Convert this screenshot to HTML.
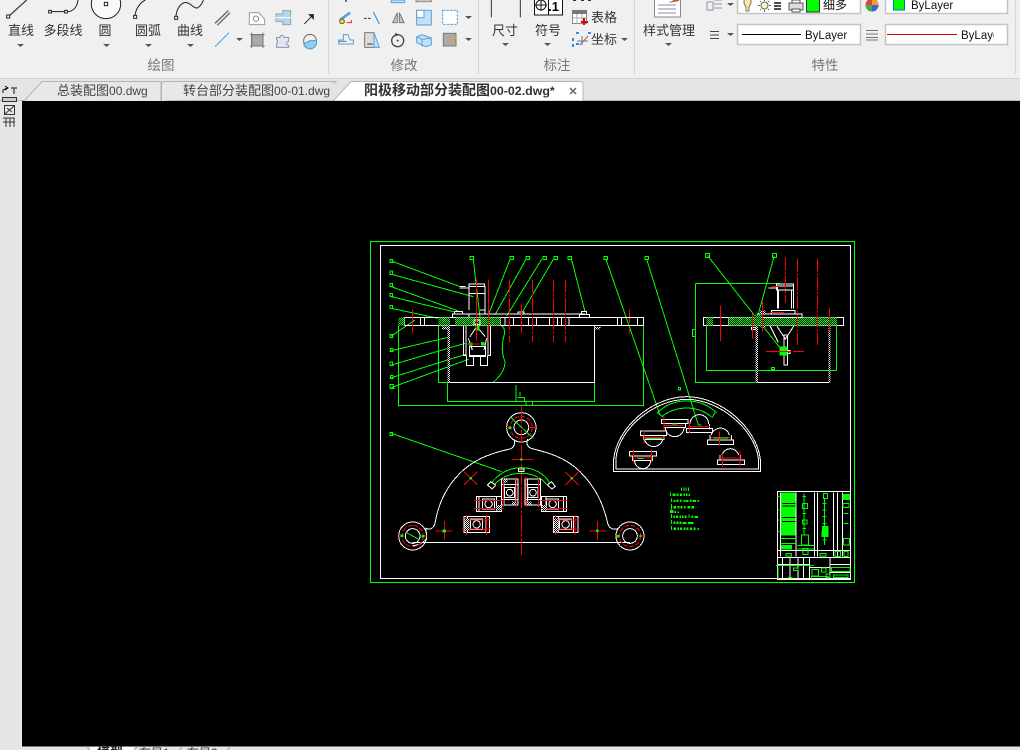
<!DOCTYPE html>
<html lang="zh"><head><meta charset="utf-8"><title>CAD</title>
<style>
html,body{margin:0;padding:0;background:#e6e6e6}
body{width:1020px;height:750px;overflow:hidden;position:relative}
svg{position:absolute;left:0;top:0;display:block}
text{font-family:"Liberation Sans","Noto Sans CJK SC",sans-serif}
.l{font-size:13px;fill:#333;text-anchor:middle}
.g{font-size:13.500px;fill:#777;text-anchor:middle}
.t{font-size:12px;fill:#444}
.c{font-size:13px}
.b{font-size:11.500px;fill:#111}
.gn{fill:none;stroke:#0f0;stroke-width:3}
.wh{fill:none;stroke:#fff;stroke-width:3}
.rd{fill:none;stroke:#f00;stroke-width:3}
</style></head><body>
<svg width="1020" height="750" viewBox="0 0 1020 750" xmlns="http://www.w3.org/2000/svg">
<defs>
<pattern id="h" width="6" height="6" patternUnits="userSpaceOnUse"><rect width="6" height="6" fill="#000"/><rect width="3" height="3" fill="#0f0"/><rect x="3" y="3" width="3" height="3" fill="#0f0"/></pattern>
<pattern id="w" width="6" height="6" patternUnits="userSpaceOnUse"><rect width="6" height="6" fill="#000"/><rect width="3" height="3" fill="#fff"/><rect x="3" y="3" width="3" height="3" fill="#fff"/></pattern>
<path id="bal" d="M-6 0h12M-4 0v-10h8v10" fill="none" stroke="#0f0" stroke-width="3"/>
<clipPath id="c1"><rect x="961" y="25" width="33" height="19"/></clipPath>
</defs>

<!-- ribbon -->
<rect width="1020" height="78" fill="#f0f0f0"/>
<rect y="78" width="1020" height="1" fill="#d4d4d4"/>
<rect y="79" width="1020" height="22" fill="#e4e4e4"/>
<rect y="100" width="1020" height="1" fill="#bbb"/>
<rect x="0" y="101" width="22" height="649" fill="#e6e6e6"/>
<rect x="328" y="0" width="1" height="74" fill="#d5d5d5"/>
<rect x="478" y="0" width="1" height="74" fill="#d5d5d5"/>
<rect x="634" y="0" width="1" height="74" fill="#d5d5d5"/>
<rect x="1015" y="0" width="1" height="74" fill="#d5d5d5"/>

<text class="l" x="21" y="35">直线</text>
<text class="l" x="63" y="35">多段线</text>
<text class="l" x="105" y="35">圆</text>
<text class="l" x="148" y="35">圆弧</text>
<text class="l" x="190" y="35">曲线</text>
<text class="l" x="505" y="35">尺寸</text>
<text class="l" x="548" y="35">符号</text>
<text class="l" x="604" y="22">表格</text>
<text class="l" x="604" y="44">坐标</text>
<text class="l" x="669" y="35">样式管理</text>
<text class="g" x="161" y="70">绘图</text>
<text class="g" x="404" y="70">修改</text>
<text class="g" x="557" y="70">标注</text>
<text class="g" x="825" y="70">特性</text>

<!-- draw icons (zoom coordinates) -->
<g transform="scale(.33333)" fill="none" stroke="#222" stroke-width="3">
<path d="M25 50L80 0" stroke-width="4" stroke="#444"/><rect x="20" y="45" width="9" height="9" fill="#fff"/>
<path d="M154 35h40M202 35C220 35 232 20 234 0"/><rect x="146" y="31" width="8" height="8" fill="#fff"/><rect x="194" y="31" width="8" height="8" fill="#fff"/>
<circle cx="318" cy="12" r="44" fill="#fafafa"/><rect x="313" y="7" width="10" height="10"/>
<path d="M405 46C408 25 420 8 436 0"/><rect x="401" y="46" width="9" height="9" fill="#fff"/>
<path d="M528 48C530 25 545 5 560 8S585 30 595 22S608 8 610 0"/><rect x="524" y="49" width="9" height="9" fill="#fff"/>
<path d="M645 70L685 32M652 76L690 38" stroke="#666" stroke-width="4"/>
<path d="M645 140L687 98" stroke="#3a9ae0" stroke-width="3"/>
<path d="M748 38h28l18 20v16h-46z" stroke="#999" fill="#fff"/><circle cx="768" cy="56" r="8" stroke="#888"/>
<path d="M828 42h20v-10h24v42h-24v-10h-20z" stroke="#8aa" fill="#b8d4ea"/><path d="M826 53h48" stroke="#fff"/>
<path d="M913 72L938 46" stroke="#333"/><path d="M928 44h12v12z" fill="#222" stroke="#222"/>
<rect x="755" y="104" width="34" height="34" fill="#aaa" stroke="#666"/><path d="M750 104h44M750 138h44M755 98v46M789 98v46" stroke="#777"/>
<path d="M830 112h10a6 6 0 0 1 12 0h14v12a6 6 0 0 0 0 12v6h-36v-12a6 6 0 0 0 0-10z" stroke="#8a94a8" fill="#e2e6ee"/>
<circle cx="930" cy="122" r="19" stroke="#666"/><path d="M930 122h19a19 19 0 0 1-38 10z" fill="#8fd0f0" stroke="#4a9ac8"/>
</g>
<g fill="#555">
<path d="M17 44h7l-3.500 3zM103 44h7l-3.500 3zM145 44h7l-3.500 3zM187 44h7l-3.500 3zM236 38h7l-3.500 3zM502 43h7l-3.500 3zM544 43h7l-3.500 3zM465 16h7l-3.500 3zM465 38h7l-3.500 3zM621 38h7l-3.500 3zM665 43h7l-3.500 3zM727 3h7l-3.500 3zM727 33h7l-3.500 3zM850 3h7l-3.500 3zM850 33h7l-3.500 3zM998 3h7l-3.500 3zM998 33h7l-3.500 3z"/>
</g>

<!-- modify icons -->
<g transform="translate(330,0) scale(.33333)" fill="none" stroke-width="3">
<rect x="184" y="0" width="40" height="8" fill="#c4e0f6" stroke="#5aa0d8"/><rect x="258" y="0" width="46" height="5" fill="#fff" stroke="#888"/>
<circle cx="48" cy="3" r="3" fill="#444"/>
<path d="M30 60l30-22" stroke="#5aa0d8" stroke-width="8"/><circle cx="36" cy="64" r="7" fill="#f5e000" stroke="#555"/><path d="M50 68h14v-8" stroke="#c33"/>
<path d="M102 55h22" stroke="#333" stroke-dasharray="8 4"/><path d="M130 36l18 36" stroke="#2a8ae0"/>
<path d="M188 68l14-30v30zM208 38l14 30h-14z" stroke="#777" fill="#bcd"/>
<rect x="260" y="31" width="44" height="44" fill="#c4e0f6" stroke="#5aa0d8"/><rect x="260" y="31" width="22" height="22" fill="#fff" stroke="#5aa0d8"/>
<rect x="338" y="31" width="44" height="42" fill="#fff" stroke="#5aa0d8" stroke-dasharray="8 3"/>
<path d="M26 132h44v-12h-10l-6-16h-14v16h-14z" stroke="#5aa0d8"/><path d="M26 124h24" stroke="#777"/>
<path d="M104 98h28v44h-28z" fill="#ddd" stroke="#777"/><path d="M132 98l16 44h-16z" fill="#c4e0f6" stroke="#5aa0d8"/><path d="M112 132h16" stroke="#333"/>
<circle cx="203" cy="122" r="18" stroke="#444" stroke-width="4"/><circle cx="203" cy="122" r="3" fill="#444"/><path d="M196 98l10 6-10 6" fill="#444"/>
<path d="M260 110l16-6 28 10v20l-16 6-28-12z" fill="#c4e0f6" stroke="#5aa0d8"/><path d="M276 118l28-4M276 118v22M260 110l16 8" stroke="#5aa0d8"/>
<rect x="340" y="100" width="38" height="38" fill="#aaa" stroke="#777"/><path d="M360 130l20-20" stroke="#e8a020" stroke-width="5"/>
<path d="M484 0v52M571 0v52" stroke="#333"/>
</g>

<!-- dimension -->
<g fill="none">
<rect x="534.500" y="-2" width="28" height="17" fill="#fff" stroke="#111"/>
<path d="M548.500 0v15" stroke="#111"/>
<circle cx="541" cy="5" r="5" stroke="#111"/>
<path d="M535 5h12M541 -1v12" stroke="#111"/>
<path d="M573 0h3M581 0h3M588 0h3" stroke="#333" stroke-width="2"/>
<rect x="572.500" y="10.500" width="14" height="13" fill="#fff" stroke="#888"/>
<rect x="572" y="10" width="15" height="4" fill="#777"/>
<path d="M573 18h13M577 14v10M582 14v10" stroke="#aaa"/>
<path d="M584 18v7M581 22h7" stroke="#d00" stroke-width="2"/>
<path d="M576 33h3M576 44h3M588 33h3M573 38v3M573 44v3" stroke="#3a8ad8" stroke-width="2"/>
<path d="M580 45l8-9M582 36v9M577 41h11" stroke="#777"/>
<rect x="654.500" y="-4" width="26" height="21" fill="#fff" stroke="#888"/>
<path d="M658 5h18M658 9h18M658 13h18" stroke="#88a" stroke-width="1"/>
<path d="M668 3l10-5 1 3z" fill="#b06020"/>
</g>
<text x="553.500" y="11" font-size="13" font-weight="bold" fill="#000" text-anchor="middle">.1</text>

<!-- layers and props -->
<rect x="737.500" y="-3.500" width="123" height="17" fill="#fff" stroke="#c4c4c4" stroke-width="1.500"/>
<rect x="885.500" y="-3.500" width="122" height="17" fill="#fff" stroke="#c4c4c4" stroke-width="1.500"/>
<rect x="737.500" y="24.500" width="123" height="20" fill="#fff" stroke="#c4c4c4" stroke-width="1.500"/>
<rect x="885.500" y="24.500" width="122" height="20" fill="#fff" stroke="#c4c4c4" stroke-width="1.500"/>
<g fill="none" stroke="#555">
<path d="M707 2h6v8h-6zM714 0h8M714 4h8M714 8h8" stroke="#8a94a8"/>
<path d="M710 31.500h9M710 35h9M710 38.500h9" stroke="#444"/>
<path d="M866 30.500h12M866 34h12M866 37.500h12M866 40h12" stroke="#777"/>
<path d="M745 -1a4.500 4.500 0 0 1 5 0c2 2 1 5-1 8v4h-3v-4c-2-3-3-6-1-8z" fill="#fce59c" stroke="#777"/>
<circle cx="764.500" cy="5.500" r="3.500" fill="#fff6c8" stroke="#666"/>
<path d="M758 5.500h2M769 5.500h2M764.500 -1v2M764.500 10v2M760 1l1 1M769 1l-1 1M760 10l1-1M769 10l-1-1" stroke="#666"/>
<path d="M774 3h7M774 6h7M774 9h7" stroke="#111" stroke-width="1.500"/><path d="M781 -1h6" stroke="#aa0" stroke-width="2"/>
<rect x="789" y="3" width="14" height="7" fill="#ddd" stroke="#555"/><rect x="792" y="0" width="8" height="3" fill="#fff" stroke="#555"/><rect x="792" y="9" width="8" height="3" fill="#fff" stroke="#555"/>
</g>
<rect x="806.500" y="-3" width="13" height="15" fill="#0f0" stroke="#333"/>
<text x="823" y="9" font-size="12" fill="#111">细多</text>
<circle cx="872" cy="5" r="6.500" fill="#e04040"/><path d="M872 5V-1.500A6.500 6.500 0 0 1 878.500 5z" fill="#f0a020"/><path d="M872 5h6.500A6.500 6.500 0 0 1 872 11.500z" fill="#4060e0"/><path d="M872 5v6.500A6.500 6.500 0 0 1 865.500 5z" fill="#40b040"/>
<rect x="893.500" y="-2" width="11" height="12" fill="#0f0" stroke="#0a70c0"/>
<text class="b" x="911" y="9">ByLayer</text>
<path d="M742 34.500h59" stroke="#000"/>
<text class="b" x="805" y="39">ByLayer</text>
<path d="M887 34.500h70" stroke="#d00"/>
<text class="b" x="961" y="39" clip-path="url(#c1)">ByLayer</text>

<!-- tabs -->
<path d="M24 101L42 81.500H161V101" fill="#e8e8e8" stroke="#b4b4b4"/>
<path d="M161.500 101V84l2-2.500H336L333 84" fill="#e8e8e8" stroke="#b4b4b4"/>
<path d="M333 101L351 81.500H581Q583 81.500 583 84V101Z" fill="#fff" stroke="#b4b4b4"/>
<text class="t" x="57" y="95"><tspan class="c">总装配图</tspan>00.dwg</text>
<text class="t" x="183" y="95"><tspan class="c">转台部分装配图</tspan>00-01.dwg</text>
<text x="364" y="95" font-size="12.400" font-weight="bold" fill="#333"><tspan font-size="14">阳极移动部分装配图</tspan>00-02.dwg*</text>
<path d="M570 88l6 6M576 88l-6 6" stroke="#666" stroke-width="1.500"/>

<!-- left strip -->
<g fill="none" stroke="#333">
<path d="M3 93v-3l4-2M5 86l3 2-3 2" stroke="#111"/>
<path d="M11 88h6M14 88v6" stroke="#555" stroke-width="1.500"/>
<rect x="2.500" y="97.500" width="14" height="4" fill="#ccc"/>
<rect x="4.500" y="105.500" width="10" height="9"/><path d="M5 114l9-8M7 108l5 4"/>
<path d="M3 118h12M6 118v9M10 118v9M14 118v9M3 122h12"/>
</g>

<!-- bottom tabs -->
<rect x="22" y="101" width="998" height="645.500" fill="#000"/>
<rect x="22" y="746" width="998" height="1" fill="#777"/>
<path d="M87 747l3 3M134 750l3-3" stroke="#aaa"/>
<rect x="90" y="747" width="44" height="3" fill="#fff"/>
<path d="M182 747l-3 3M230 747l-3 3" stroke="#aaa"/>
<text x="97" y="757" font-size="13" font-weight="bold" fill="#222">模型</text>
<text x="139" y="757" font-size="12" fill="#333">布局1</text>
<text x="187" y="757" font-size="12" fill="#333">布局2</text>

<!-- CAD frames -->
<g shape-rendering="crispEdges">
<rect x="370.500" y="241.500" width="484" height="341" fill="none" stroke="#0f0"/>
<rect x="380.500" y="245.500" width="470" height="333" fill="none" stroke="#fff"/>

<!-- front view -->
<g transform="translate(370,240) scale(.33333)">
<g class="gn">
<path d="M64 63L270 140M64 103L310 170M64 140L265 213M64 170L250 215M64 205L205 235M64 288L135 240M64 332L235 292M64 375L285 310M64 413L290 342M66 442L295 358"/>
<path d="M300 49h11v10h-11zM420 49h10v10h-10zM468 49h10v10h-10zM519 49h10v10h-10zM552 49h10v10h-10zM594 49h10v10h-10z" />
<path d="M310 60L330 232M420 58L355 225M468 58L375 225M515 58L410 228M550 58L458 215M605 60L645 215"/>
<path d="M85 257V497H820V257M205 257V427H232M232 427V485H673V427M85 497v3M820 497v3M438 435V485M442 472h22v13M468 485h20v11h-20zM450 456v12" />
<path d="M370 427C395 405 405 385 405 365C395 340 395 320 400 295C405 280 405 265 395 257"/>
</g>
<use href="#bal" x="64" y="68"/><use href="#bal" x="64" y="103"/><use href="#bal" x="64" y="140"/><use href="#bal" x="64" y="170"/><use href="#bal" x="64" y="206"/><use href="#bal" x="64" y="293"/><use href="#bal" x="65" y="335"/><use href="#bal" x="64" y="376"/><use href="#bal" x="65" y="416"/><rect x="60" y="433" width="11" height="11" fill="none" stroke="#0f0" stroke-width="3"/><path d="M58 445h16" stroke="#0f0" stroke-width="3"/>
<rect x="103" y="232" width="717" height="25" class="wh"/>
<path class="wh" d="M151 232v25M163 232v25M392 232v25M405 232v25M430 232v25M476 232v25M499 232v25M538 232v25M551 232v25M562 232v25M575 232v25M597 232v25M742 232v25M755 232v25M802 232v25"/>
<rect x="85" y="232" width="18" height="25" fill="url(#h)"/>
<rect x="205" y="232" width="35" height="25" fill="url(#h)"/>
<rect x="255" y="232" width="137" height="25" fill="url(#h)"/>
<path class="wh" d="M247 232v-10h50v10M297 210v-70h48v70M297 132h47v8h-47zM297 160h48M330 210h15v12h-48M300 222h345M628 232v-9h30v9M634 222v-8h16v8M268 144h28M270 140h16M253 220v-6h24v6M444 222v-6h18v6" />
<path class="wh" d="M280 257v90h8V257M354 257v90h8V257M298 347h50M289 347v30h21v-30M331 347v30h21v-30M298 320h48v30h-48zM300 290l20-30 26 30M295 295l12 35M350 295l-8 35M312 240h18v14h-18z"/>
<path class="wh" d="M673 257V427H232M673 263h18"/>
<rect x="232" y="257" width="8" height="170" fill="url(#w)"/>
<rect x="216" y="259" width="16" height="9" fill="url(#w)"/>
<rect x="674" y="261" width="16" height="8" fill="url(#w)"/>
<rect x="317" y="258" width="12" height="14" fill="#0f0"/><rect x="295" y="308" width="12" height="8" fill="#0f0"/><rect x="333" y="306" width="10" height="10" fill="#0f0"/>
<path class="rd" d="M127 208v72M355 118v188M454 194v85M319 118v185"/>
<path class="rd" d="M292 312h36" />
<path class="rd" stroke-dasharray="40 5 6 5" d="M418 118v188M487 118v188M550 118v188M586 118v188M778 208v72"/>
</g>

<!-- plan view -->
<g transform="translate(370,405) scale(.33333)">
<path class="gn" d="M64 85L395 200"/>
<use href="#bal" x="64" y="92"/>
<path class="wh" d="M128 422C150 420 165 410 170 398L168 370C180 375 190 372 195 355C205 295 230 240 280 195C310 170 345 148 420 132C432 128 436 118 432 102M473 102C468 118 473 128 490 132C560 148 600 170 630 200C680 250 700 300 712 350C716 372 730 376 745 370"/>
<path class="wh" d="M128 412H780"/>
<circle class="wh" cx="454" cy="67" r="44"/>
<circle class="wh" cx="454" cy="67" r="22"/>
<circle class="wh" cx="128" cy="393" r="42"/><circle class="wh" cx="128" cy="393" r="22"/>
<circle class="wh" cx="780" cy="393" r="42"/><circle class="wh" cx="780" cy="393" r="22"/>
<circle class="rd" cx="454" cy="67" r="33" stroke-dasharray="14 5"/><circle class="rd" cx="128" cy="393" r="32" stroke-dasharray="14 5"/><circle class="rd" cx="780" cy="393" r="32" stroke-dasharray="14 5"/>
<path class="rd" d="M454 5V115M454 120v330" stroke-dasharray="50 6 8 6"/>
<path class="rd" d="M408 67h10M476 67h22M82 393h18M160 393h14M735 393h14M808 393h14M424 163h65M196 378h52M223 348v56M658 378h52M682 348v56M282 200l40 40M322 200l-40 40M586 200l40 40M626 200l-40 40"/>
<path class="gn" d="M420 35L490 100M108 382l40 22"/>
<path class="gn" d="M362 236C385 205 420 188 454 188C490 188 525 205 540 236" stroke-width="7"/>
<path class="gn" d="M372 240C395 215 425 205 454 205C482 205 515 215 530 240" stroke-width="6"/>
<path class="wh" d="M352 240l10-10 15 10-10 12zM532 240l12-10 12 14-10 8zM446 192h16v8h-16z"/>
<g>
<path class="wh" d="M394 222h50v78h-50zM402 222v78M436 222v78M394 238h50M394 284h50M404 248h30v30h-30z"/><circle class="wh" cx="419" cy="263" r="10"/>
<path class="wh" d="M465 222h47v78h-47zM473 222v78M505 222v78M465 238h47M465 284h47M474 248h30v30h-30z"/><circle class="wh" cx="489" cy="263" r="10"/>
<path class="wh" d="M319 274h76v46h-76zM327 274v46M379 274v46M338 282h36v30h-36z"/><circle class="wh" cx="356" cy="297" r="11"/>
<path class="wh" d="M514 274h76v46h-76zM528 274v46M580 274v46M530 282h36v30h-36z"/><circle class="wh" cx="548" cy="297" r="11"/>
<path class="wh" d="M282 335h76v48h-76zM292 335v48M348 335v48M302 342h36v32h-36z"/><circle class="wh" cx="320" cy="358" r="11"/>
<path class="wh" d="M550 335h74v48h-74zM566 335v48M610 335v48M568 342h36v32h-36z"/><circle class="wh" cx="587" cy="358" r="11"/>
<path class="rd" d="M400 216v90M438 216v90M468 216v90M506 216v90M312 286h88M312 310h88M512 286h80M512 310h80M290 330v60M350 330v60M276 345h84M276 372h84M556 330v60M615 330v60M545 345h84M545 372h84"/>
</g>
<rect x="400" y="224" width="12" height="8" fill="url(#w)"/><rect x="426" y="290" width="14" height="8" fill="url(#w)"/><rect x="470" y="290" width="14" height="8" fill="url(#w)"/><rect x="380" y="300" width="14" height="16" fill="url(#w)"/><rect x="516" y="300" width="14" height="16" fill="url(#w)"/><rect x="284" y="340" width="14" height="38" fill="url(#w)"/><rect x="552" y="340" width="14" height="42" fill="url(#w)"/>
<g fill="#0f0"><rect x="218" y="373" width="10" height="10"/><rect x="678" y="373" width="8" height="8"/><rect x="298" y="216" width="8" height="8"/><rect x="601" y="216" width="7" height="7"/><rect x="450" y="160" width="7" height="6"/><rect x="92" y="388" width="8" height="8"/><rect x="155" y="390" width="8" height="8"/><rect x="740" y="390" width="8" height="8"/><rect x="808" y="390" width="6" height="6"/><rect x="416" y="64" width="8" height="8"/></g>
</g>

<!-- side + half-round views -->
<g transform="translate(600,240) scale(.33333)">
<path class="gn" d="M18 58L180 525M140 58L295 555M322 46L545 330M523 46L470 240M286 130H540M286 130V428H468M319 258V391H710V258M277 268h10v22h-10zM514 382h10v7h-10z"/>
<path class="gn" d="M12 49h10v10H12zM135 49h10v10h-10zM316 41h12v11h-12zM517 41h12v11h-12z"/>
<path class="gn" d="M236 442h6v8h-6zM175 520l10 8M345 518l-8 14"/>
<path class="wh" d="M310 232H731V257H310zM362 232v25M385 232v25"/>
<rect x="319" y="232" width="20" height="25" fill="url(#h)"/>
<rect x="385" y="232" width="326" height="25" fill="url(#h)"/>
<path class="wh" d="M532 205v-67h48v67M530 132h50v18h-50zM505 144h28M536 150v55M575 150v55M515 212h70v10h-70zM470 222h136v10H470M530 257l26 40 26-40M510 257l25 50M552 285h10v90h-10zM470 257v170M688 257v170M470 427H688M455 262h12v6h-12zM540 332h30v8h-30z"/>
<rect x="466" y="257" width="8" height="170" fill="url(#w)"/><rect x="685" y="257" width="7" height="170" fill="url(#w)"/>
<rect x="480" y="212" width="16" height="10" fill="url(#w)"/><rect x="482" y="257" width="14" height="6" fill="url(#w)"/>
<rect x="538" y="320" width="24" height="26" fill="#0f0"/><rect x="463" y="225" width="22" height="32" fill="url(#h)"/>
<path class="rd" d="M361 197v106M487 180v95M458 222v75M515 140h20M510 217h42M498 334h75M580 334h32"/>
<path class="rd" stroke-dasharray="40 5 6 5" d="M556 52v135M592 55v260M652 55v260M688 205v70M88 208v72"/>
<path class="gn" d="M0 497H130V257"/>
<path class="wh" d="M0 232H130V257H0M52 232v25M64 232v25M112 232v25"/>
<path class="wh" d="M41 694H481V658C470 565 365 470 260 470C155 470 50 565 41 658ZM48 687H475V655C465 570 360 478 260 478C160 478 55 570 48 655Z"/>
<path class="gn" d="M172 520C215 470 305 470 350 520M185 532C220 495 300 495 335 532"/>
<g class="wh">
<path d="M184 538h80v12h-80zM192 550v12h64v-12M196 562a28 28 0 0 0 56 0"/>
<path d="M259 565h78v12h-78zM268 552v13h60v-13M270 552a28 28 0 0 1 56 0"/>
<path d="M121 573h78v14h-78zM130 587v12h62v-12M134 599a28 28 0 0 0 54 0"/>
<path d="M322 600h78v13h-78zM330 585v15h64v-15M334 585a28 28 0 0 1 54 0"/>
<path d="M88 634h82v14h-82zM98 648v14h60v-14M104 662a24 24 0 0 0 48 0"/>
<path d="M352 660h82v14h-82zM360 645v15h62v-15M366 645a26 26 0 0 1 50 0"/>
</g>
<path class="rd" d="M190 556h60M270 560h60M134 592h60M332 592h60M98 654h60M354 654h70M192 530v40M268 545v35M132 570v42M358 575v42M100 628v40M420 635v45M155 628v40M368 640v40"/>
<path d="M216 552h16M136 596h50M340 594h44M112 655h18M296 555h8" stroke="#0f0" stroke-width="3"/>
</g>

<!-- notes + title block -->
<g transform="translate(660,480) scale(.33333)">
<g fill="#0f0">
<path d="M63 22h3v11h-3zM71 22h3v11h-3zM77 22h3v11h-3zM84 22h3v11h-3z"/>
<path d="M30 37h3v11h-3zM38 41h8v7h-8zM50 40h6v8h-6zM60 41h6v7h-6zM70 40h5v8h-5zM78 41h4v7h-4zM85 42h5v6h-5z"/>
<path d="M33 55h3v11h-3zM40 60h6v6h-6zM50 58h5v8h-5zM60 58h5v8h-5zM70 60h6v6h-6zM78 60h8v6h-8zM90 58h5v8h-5zM98 60h10v6h-10zM112 60h5v6h-5z"/>
<path d="M33 72h3v16h-3zM40 78h8v8h-8zM52 78h6v8h-6zM62 78h5v8h-5zM72 78h5v8h-5zM82 78h8v8h-8zM94 78h8v8h-8z"/>
<path d="M30 90h10v9H30zM43 93h5v6h-5zM52 94h5v5h-5z"/>
<path d="M33 102h3v12h-3zM40 106h5v8h-5zM48 106h6v8h-6zM58 106h5v8h-5zM66 106h5v8h-5zM74 106h6v8h-6zM86 104h3v10h-3zM94 106h5v8h-5zM104 108h10v6h-10z"/>
<path d="M33 120h3v12h-3zM40 124h6v8h-6zM50 124h5v8h-5zM58 124h6v8h-6zM68 126h12v6H68zM84 126h16v6H84z"/>
<path d="M33 138h3v12h-3zM40 142h8v8h-8zM52 142h5v8h-5zM60 142h6v8h-6zM70 142h6v8h-6zM80 142h6v8h-6zM90 142h6v8h-6zM100 142h6v8h-6zM112 144h5v6h-5z"/>
</g>
<rect x="352" y="35" width="219" height="263" class="wh"/>
<rect x="362" y="37" width="46" height="130" fill="#0f0"/>
<path d="M366 70h40M366 78h40M366 112h40M366 125h40" stroke="#000" stroke-width="3"/>
<rect x="362" y="195" width="34" height="14" fill="#0f0"/>
<path d="M362 37V230M408 37V230M464 37V230M472 37V230M520 37V230M532 37V230M547 37V230M352 212H572M352 232H572M352 253H448M448 232V298M510 232V298M510 253H572M510 278H572M368 232V298M390 232V298M414 232V298M430 232V298M448 262H510" class="wh"/>
<g class="gn">
<path d="M352 50h6M352 90h6M352 120h6M352 155h6M362 175h46M362 190h46M366 64h40v20h-40zM427 70h16v15h-16zM432 40v125M427 120h14v12h-14zM424 165h22v30h-22zM412 197h50M412 207h50M429 205h15v18h-15zM490 40h12v15h-12zM494 55v140M486 155h18v15h-18zM480 220h18v8h-18zM549 70h18v12h-18zM556 42v18M550 175h18v20h-18zM552 215h12v14h-12zM525 215h16v15h-16zM378 220h16v8h-16zM348 257h112M354 262v36M384 292h12v6h-12zM400 264h14v8h-14zM456 268h20v20h-20zM484 264h14v12h-14zM498 282h12v10h-12zM454 290h50v8h-50zM514 262h56v12h-56zM520 285h44v8h-44z"/>
<path d="M428 50h10M428 100h10M428 145h10M488 70h12M488 90h12M488 110h12M488 130h12M488 180h12M550 100h16M550 130h16"/>
</g>
<rect x="548" y="42" width="22" height="18" fill="#0f0"/>
<rect x="486" y="138" width="20" height="30" fill="#0f0"/>
<path d="M352 298H572" class="wh"/>
</g>
</g>
</svg>
</body></html>
